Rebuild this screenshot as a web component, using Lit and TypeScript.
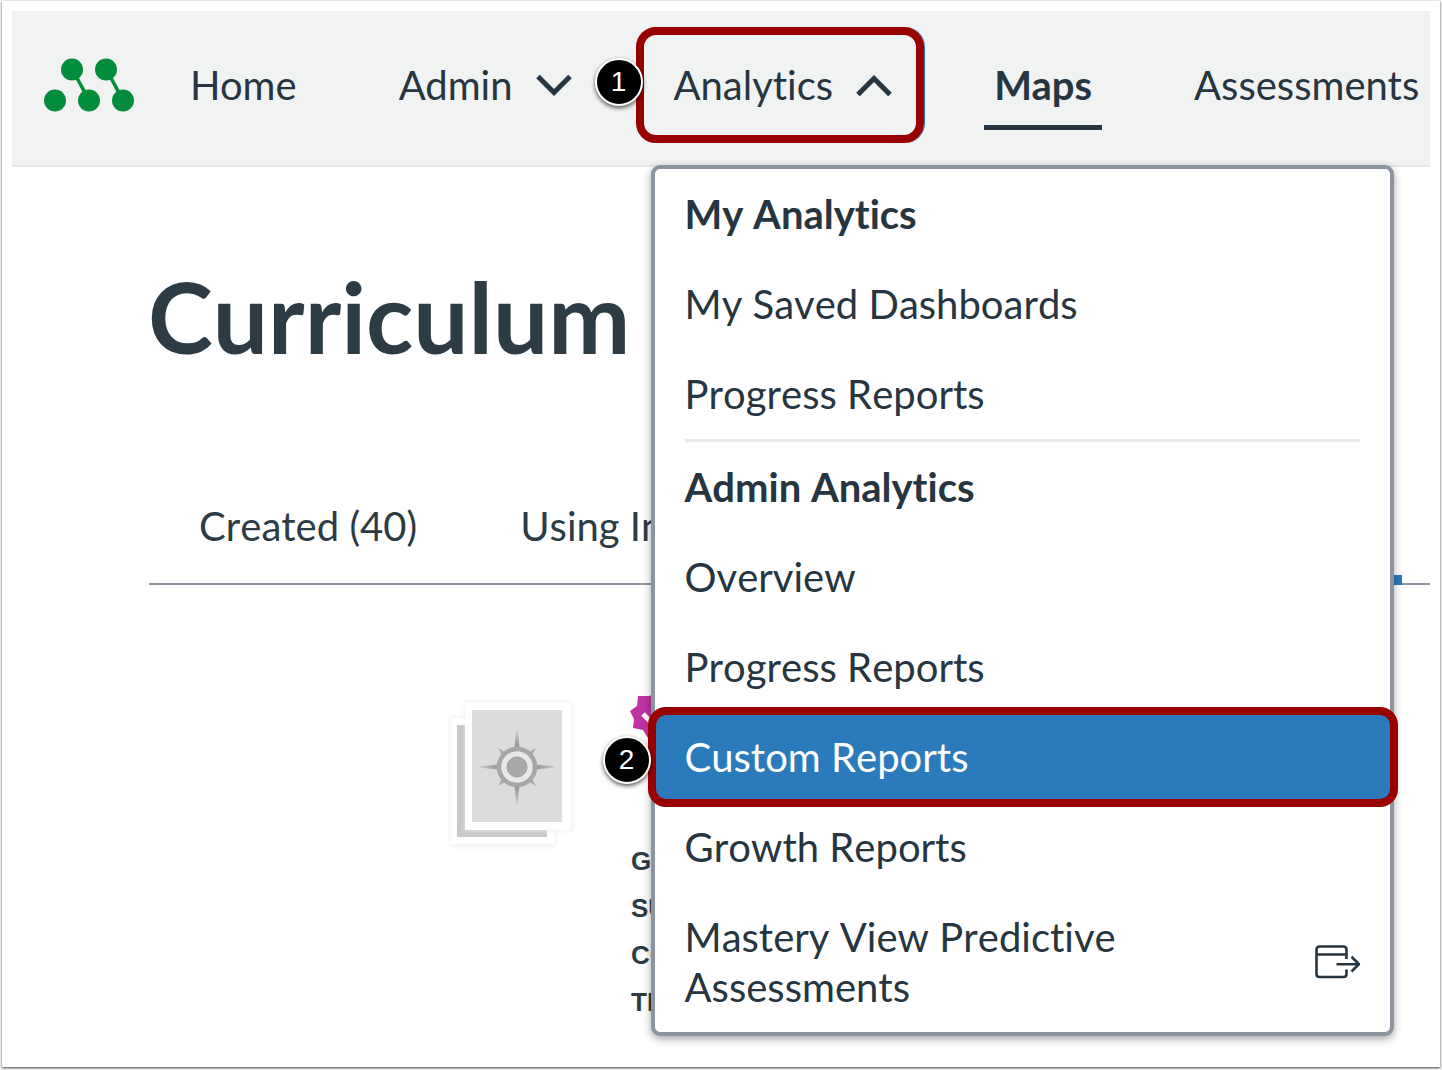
import { LitElement, html, css, svg, nothing } from "lit";
import { customElement, property } from "lit/decorators.js";

@customElement("step-badge")
class StepBadge extends LitElement {
  static styles = css`
    :host {
      box-sizing: border-box;
      display: flex;
      align-items: center;
      justify-content: center;
      width: 48px;
      height: 48px;
      border: 2px solid #fff;
      border-radius: 50%;
      background: #000;
      color: #fff;
      box-shadow: 0 2px 4px rgba(0, 0, 0, 0.65);
      font: 400 28px/40px "Liberation Sans", Arial, sans-serif;
    }
  `;
  render() {
    return html`<slot></slot>`;
  }
}

type Entry = { label: string; kind?: "heading" | "current" | "external" };

const GROUPS: Entry[][] = [
  [
    { label: "My Analytics", kind: "heading" },
    { label: "My Saved Dashboards" },
    { label: "Progress Reports" },
  ],
  [
    { label: "Admin Analytics", kind: "heading" },
    { label: "Overview" },
    { label: "Progress Reports" },
    { label: "Custom Reports", kind: "current" },
    { label: "Growth Reports" },
    { label: "Mastery View Predictive Assessments", kind: "external" },
  ],
];

@customElement("analytics-menu")
class AnalyticsMenu extends LitElement {
  static styles = css`
    :host {
      box-sizing: border-box;
      display: block;
      background: #fff;
      border: 4px solid #8b949f;
      border-radius: 9px;
      box-shadow: 0 3px 8px rgba(0, 0, 0, 0.35);
      font-size: 40px;
      line-height: 50px;
      color: #273540;
    }
    .group {
      list-style: none;
      margin: 0;
      padding: 0;
    }
    .rule {
      height: 3px;
      margin: 0 30px;
      border: 0;
      background: #e8eaec;
    }
    .row {
      position: relative;
    }
    .heading,
    .link {
      display: flex;
      align-items: center;
      justify-content: space-between;
      margin: 0;
      padding: 20px 30px;
      font-size: 40px;
      font-weight: 400;
      color: inherit;
      text-decoration: none;
    }
    .heading {
      font-weight: 700;
    }
    .label {
      max-width: 480px;
    }
    .current {
      background: #2b7abc;
      color: #fff;
    }
    .ring {
      position: absolute;
      inset: -5px -8px -5px -7px;
      border: 8px solid #990000;
      border-radius: 18px;
      pointer-events: none;
    }
    .step {
      position: absolute;
      left: -52px;
      top: 24px;
    }
    .external {
      flex: none;
      width: 46px;
      height: 34px;
    }
  `;

  private row(e: Entry) {
    if (e.kind === "heading") {
      return html`<li class="row"><h2 class="heading">${e.label}</h2></li>`;
    }
    const current = e.kind === "current";
    return html`<li class="row">
      <a class="link ${current ? "current" : ""}" href="#">
        <span class="label">${e.label}</span>
        ${e.kind === "external"
          ? html`<svg class="external" viewBox="0 0 46 34" fill="none" stroke="#273540" stroke-width="2.6" aria-hidden="true">
              <path d="M32.500 14V5Q32.500 1.500 29.500 1.500H5.500Q2.500 1.500 2.500 5V29Q2.500 32 5.500 32H29.500Q32.500 32 32.500 29V24.500M2.500 9.500H32.500" />
              <path d="M22.500 19.200H45M37.500 11.800L45 19.200L37.500 26.500" />
            </svg>`
          : nothing}
      </a>
      ${current
        ? html`<span class="ring"></span><step-badge class="step">2</step-badge>`
        : nothing}
    </li>`;
  }

  render() {
    return GROUPS.map(
      (g, i) => html`${i ? html`<hr class="rule" />` : nothing}
        <ul class="group">${g.map((e) => this.row(e))}</ul>`
    );
  }
}

@customElement("nav-item")
class NavItem extends LitElement {
  @property() label = "";
  @property() arrow = "";
  @property({ type: Boolean }) active = false;

  static styles = css`
    :host {
      display: flex;
      align-items: center;
      flex: none;
    }
    .item {
      display: flex;
      align-items: center;
      gap: 23px;
      margin: 0;
      padding: 11px 10px 15px;
      border: 0 solid transparent;
      border-width: 5px 0;
      background: none;
      color: #273540;
      font: 400 40px/50px Lato, "Liberation Sans", sans-serif;
      font-variant-ligatures: none;
      text-decoration: none;
      white-space: nowrap;
    }
    .active {
      font-weight: 700;
      border-bottom-color: #273540;
    }
    .arrow {
      width: 36px;
      height: 22px;
    }
  `;

  render() {
    const cls = `item ${this.active ? "active" : ""}`;
    if (!this.arrow) return html`<a class=${cls} href="#">${this.label}</a>`;
    const up = this.arrow === "up";
    return html`<button class=${cls} aria-expanded=${up ? "true" : "false"}>
      ${this.label}
      <svg class="arrow" viewBox="0 0 36 22" fill="none" stroke="#273540" stroke-width="5" aria-hidden="true">
        ${up ? svg`<path d="M2 20.500L18 4.500L34 20.500" />` : svg`<path d="M2 2.500L18 18.500L34 2.500" />`}
      </svg>
    </button>`;
  }
}

const COMPASS_TICKS = [45, 135, 225, 315];
const COMPASS_POINTS = [0, 90, 180, 270];

@customElement("app-root")
class AppRoot extends LitElement {
  static styles = css`
    :host {
      display: block;
      box-sizing: border-box;
      min-height: 100vh;
      padding: 1px 2px 3px;
      overflow: hidden;
      background: #f4f4f4;
      color: #2d3b45;
      font-family: Lato, "Liberation Sans", sans-serif;
      font-variant-ligatures: none;
      font-kerning: none;
    }
    .frame {
      box-sizing: border-box;
      min-height: calc(100vh - 4px);
      padding: 10px;
      background: #fff;
      box-shadow: 0 1px 2px rgba(0, 0, 0, 0.7);
    }
    .bar {
      display: flex;
      align-items: stretch;
      height: 154px;
      padding-left: 32px;
      background: #f1f3f3;
      border-bottom: 2px solid #e6e8e8;
    }
    .brand {
      display: flex;
      align-items: center;
      margin-right: 46px;
    }
    .logo {
      width: 90px;
      height: 54px;
      margin-bottom: 6px;
    }
    .nav {
      display: flex;
      gap: 82px;
      padding-bottom: 2px;
    }
    .open {
      position: relative;
      display: flex;
    }
    .ring {
      position: absolute;
      inset: 16px -22px 20px -28px;
      border: 8px solid #990000;
      border-radius: 20px;
      box-shadow: 1px 0 0 #2b7abc;
      pointer-events: none;
    }
    .step {
      position: absolute;
      left: -69px;
      top: 47px;
    }
    .menu {
      position: absolute;
      z-index: 2;
      top: calc(100% + 2px);
      left: -13px;
      width: 743px;
    }
    .content {
      padding: 89px 0 0 136px;
    }
    .title {
      margin: 0;
      font-size: 98px;
      line-height: 120px;
      font-weight: 700;
    }
    .tabs {
      display: flex;
      align-items: flex-end;
      margin: 125px 0 0 1px;
      padding-left: 40px;
      gap: 83px;
      border-bottom: 2px solid #8b949f;
    }
    .tab {
      margin: 0;
      padding: 0 10px 32px;
      border: 0;
      background: none;
      color: inherit;
      font: 400 40px/50px Lato, "Liberation Sans", sans-serif;
      font-kerning: none;
      white-space: nowrap;
    }
    .selected {
      width: 120px;
      height: 10px;
      margin: 0 28px -2px auto;
      background: #2b7abc;
    }
    .map {
      display: flex;
      align-items: flex-start;
      gap: 56px;
      padding: 105px 0 0 291px;
    }
    .cover {
      flex: none;
      width: 136px;
      height: 164px;
    }
    .facts {
      display: flex;
      flex-direction: column;
    }
    .star {
      width: 52px;
      height: 52px;
      margin: 4px 0 92px -2px;
    }
    .fact {
      margin: 0;
      font: 700 26px/47px "Liberation Sans", Arial, sans-serif;
    }
  `;

  render() {
    return html`<div class="frame">
      <header class="bar">
        <a class="brand" href="#" aria-label="Home">
          <svg class="logo" viewBox="0 0 90 54" fill="#048c3d" aria-hidden="true">
            <path d="M28 11L45 42M62 11L79 42" stroke="#048c3d" stroke-width="3.600" />
            <circle cx="28" cy="11.500" r="11" /><circle cx="62" cy="11.500" r="11" />
            <circle cx="11" cy="42.500" r="11" /><circle cx="45" cy="42.500" r="11" />
            <circle cx="79" cy="42.500" r="11" />
          </svg>
        </a>
        <nav class="nav">
          <nav-item label="Home"></nav-item>
          <nav-item label="Admin" arrow="down"></nav-item>
          <div class="open">
            <nav-item label="Analytics" arrow="up"></nav-item>
            <span class="ring"></span>
            <step-badge class="step">1</step-badge>
            <analytics-menu class="menu"></analytics-menu>
          </div>
          <nav-item label="Maps" active></nav-item>
          <nav-item label="Assessments"></nav-item>
        </nav>
      </header>
      <main class="content">
        <h1 class="title">Curriculum</h1>
        <div class="tabs">
          <button class="tab">Created (40)</button>
          <button class="tab">Using In</button>
          <span class="selected"></span>
        </div>
        <section class="map">
          <svg class="cover" viewBox="0 0 136 164" aria-hidden="true">
            <defs>
              <filter id="soft"><feGaussianBlur stdDeviation="2" /></filter>
              <radialGradient id="spike" gradientUnits="userSpaceOnUse" cx="0" cy="0" r="38">
                <stop offset="0.5" stop-color="#939393" />
                <stop offset="1" stop-color="#cfcfcf" />
              </radialGradient>
            </defs>
            <rect x="11" y="27" width="106" height="130" fill="#ececec" opacity="0.7" filter="url(#soft)" />
            <rect x="12" y="28" width="104" height="126" fill="#fff" />
            <rect x="18" y="35" width="90" height="112" fill="#c9c9c9" />
            <rect x="26" y="11" width="108" height="130" fill="#ececec" opacity="0.7" filter="url(#soft)" />
            <rect x="26" y="13" width="106" height="127" fill="#fff" />
            <rect x="33" y="20" width="90" height="112" fill="#dcdcdc" />
            <g transform="translate(78 77)">
              ${COMPASS_POINTS.map((a) => svg`<path transform="rotate(${a})" d="M-0.800 -37H0.800L2.600 -18H-2.600Z" fill="url(#spike)" />`)}
              ${COMPASS_TICKS.map((a) => svg`<path transform="rotate(${a})" d="M0 -27L2.500 -18H-2.500Z" fill="#acacac" />`)}
              <circle r="18" fill="#e8e8e8" stroke="#a6a6a6" stroke-width="4.500" />
              <circle r="10" fill="#a9a9a9" stroke="#9f9f9f" stroke-width="1" />
            </g>
          </svg>
          <div class="facts">
            <svg class="star" viewBox="0 0 52 52" fill="#bf32a4" aria-hidden="true">
              <path d="M9 2L20 2L26 0L32 5L44 5L44 15L50 24L45 32L45 43L34 43L26 48L19 44L14 36L4 34L5 25L1 17L8 12Z" />
              <path d="M14 20L24 30L38 14" fill="none" stroke="#fff" stroke-width="5" />
            </svg>
            <p class="fact">G</p>
            <p class="fact">SU</p>
            <p class="fact">CO</p>
            <p class="fact">TI</p>
          </div>
        </section>
      </main>
    </div>`;
  }
}
